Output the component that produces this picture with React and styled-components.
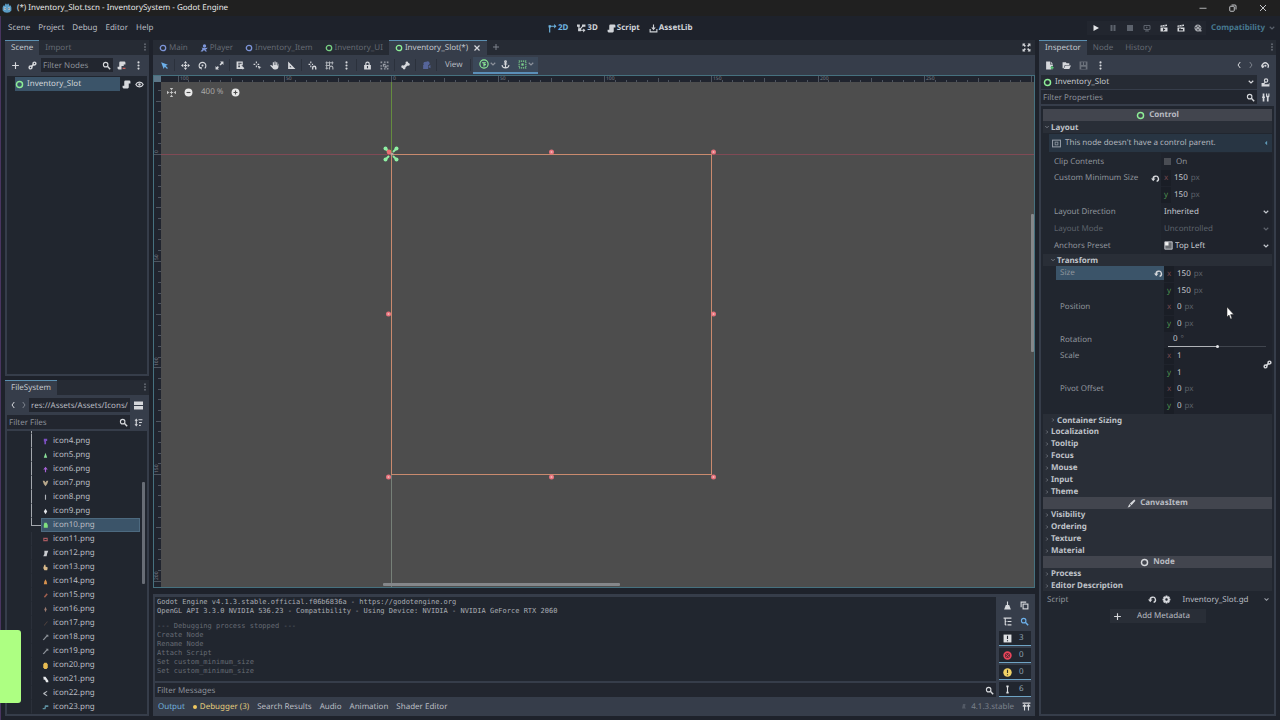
import React, { useState } from 'react';
import styled, { createGlobalStyle } from 'styled-components';

const GlobalStyle = createGlobalStyle`
  * {
    box-sizing: border-box;
  }

  body {
    margin: 0;
    background: #1e222b;
    overflow: hidden;
    text-rendering: geometricPrecision;
  }

  body, button, input, select {
    font-family: 'Noto Sans', 'Open Sans', sans-serif;
    font-size: 8px;
    line-height: 12px;
    color: #b9bcc2;
  }

  button, input, select {
    margin: 0;
    padding: 0;
    border: 0;
    background: none;
    outline: none;
    text-rendering: inherit;
  }

  ul {
    margin: 0;
    padding: 0;
    list-style: none;
  }
`;

/* ---------- icons ---------- */

const line = { fill: 'none', stroke: 'currentColor', strokeWidth: 2 };

const ICONS = {
  add: <path d="M8 2v12M2 8h12" {...line} />,
  close: <path d="M3 3l10 10M13 3L3 13" {...line} strokeWidth={2.4} />,
  link: (
    <g {...line}>
      <circle cx="4.5" cy="11.5" r="2.5" strokeWidth={2.6} />
      <circle cx="11.5" cy="4.5" r="2.5" strokeWidth={2.6} />
      <path d="M6 10l4-4" strokeWidth={3} />
    </g>
  ),
  search: (
    <g {...line}>
      <circle cx="6.5" cy="6.5" r="4" />
      <path d="M9.5 9.5L14.5 14.5" strokeWidth={2.6} />
    </g>
  ),
  script: (
    <path
      fill="currentColor"
      d="M6 1a2 2 0 0 0-2 2v7H1v3a2 2 0 0 0 2 2h7a2 2 0 0 0 2-2V6h3V3a2 2 0 0 0-2-2z"
    />
  ),
  scriptDetach: (
    <g>
      <path
        fill="currentColor"
        d="M6 1a2 2 0 0 0-2 2v7H1v3a2 2 0 0 0 2 2h5V9h4V6h3V3a2 2 0 0 0-2-2z"
      />
      <path d="M10 13h5" stroke="#e0675f" strokeWidth="2" />
    </g>
  ),
  dots: (
    <g fill="currentColor">
      <circle cx="8" cy="2.5" r="1.9" />
      <circle cx="8" cy="8" r="1.9" />
      <circle cx="8" cy="13.5" r="1.9" />
    </g>
  ),
  eye: (
    <g>
      <path d="M1.5 8C4 2.5 12 2.5 14.500 8 12 13.500 4 13.500 1.500 8z" {...line} />
      <circle cx="8" cy="8" r="2.2" fill="currentColor" />
    </g>
  ),
  ring: <circle cx="8" cy="8" r="5.4" {...line} strokeWidth={2.6} />,
  player: (
    <g fill="currentColor">
      <circle cx="9" cy="4" r="3.4" />
      <path d="M3 7l4 1h5l3-1-1 3-3 1 3 4h-3l-3-3-3 3H1l4-5z" />
    </g>
  ),
  select: <path fill="currentColor" d="M2 2l4.500 12 2-4 4 4 1.500-1.500-4-4 4-2z" />,
  move: (
    <g fill="currentColor">
      <path d="M8 0l3 4H5zM8 16l3-4H5zM0 8l4-3v6zM16 8l-4-3v6zM7 5h2v2h2v2H9v2H7V9H5V7h2z" />
    </g>
  ),
  rotate: (
    <g>
      <path d="M4 13A6 6 0 1 1 12 13" {...line} />
      <path d="M1.500 10.500h5v5z" fill="currentColor" />
      <circle cx="8" cy="8" r="1.800" fill="currentColor" />
    </g>
  ),
  scale: (
    <g fill="currentColor">
      <path d="M9 1h6v6l-2-2-3 3-2-2 3-3zM7 15H1V9l2 2 2-2 2 2-2 2z" />
    </g>
  ),
  list: (
    <path
      fill="currentColor"
      d="M1 1h11v7l-2-1v1l5 5-3 2-1-1H1zM4 3v2h6V3zM4 6v2h3V6zM4 9v2h3V9z"
      fillRule="evenodd"
    />
  ),
  pivot: (
    <g fill="currentColor">
      <path d="M5 1h2v3H5zM1 5h3v2H1zM5 8h2v3H5zM8 5h3v2H8z" />
      <path d="M8 8l7 3-3 1-1 3z" />
    </g>
  ),
  hand: (
    <path
      fill="currentColor"
      d="M5 2h2v5h1V1h2v6h1V2h2v6h1V5h1v6q-1 4-5 4H8q-3 0-4-3L0 8l2-1 3 2z"
    />
  ),
  ruler: <path fill="currentColor" fillRule="evenodd" d="M2 1l13 13H2zM5 8v3h3z" />,
  snap: (
    <g fill="currentColor">
      <path d="M4 1h2v3H4zM1 5h3v2H1zM4 8h2v3H4zM7 5h2v2H7z" />
      <path d="M7 15v-3a4 4 0 0 1 8 0v3h-2.500v-3a1.500 1.500 0 0 0-3 0v3z" />
    </g>
  ),
  grid: (
    <g>
      <path d="M3 1v14M8 1v7M13 1v5M1 3h14M1 8h8M1 13h5" {...line} strokeWidth={1.8} />
      <path d="M8 15v-3a3 3 0 0 1 6 0v3" {...line} />
    </g>
  ),
  lock: (
    <g>
      <path d="M5 8V5a3 3 0 0 1 6 0v3" {...line} />
      <path d="M2 7h12v8H2zM7 9v4h2V9z" fill="currentColor" fillRule="evenodd" />
    </g>
  ),
  group: (
    <g fill="currentColor">
      <path d="M1 1h3v2H3v1H1zM7 1h3v2H7zM12 1h3v3h-2V3h-1zM1 7h2v3H1zM13 7h2v3h-2zM1 12h2v1h1v2H1zM7 13h3v2H7zM15 12v3h-3v-2h1v-1z" />
      <path d="M5 5h5v2H7v3H5zM8 8h4v4H8z" />
    </g>
  ),
  bone: (
    <g fill="currentColor">
      <circle cx="10.500" cy="3.500" r="2.500" />
      <circle cx="13" cy="6" r="2.500" />
      <circle cx="3" cy="10" r="2.500" />
      <circle cx="5.500" cy="12.500" r="2.500" />
      <path d="M9.500 4l3 3-6 6-3.500-3z" />
    </g>
  ),
  camera: (
    <g fill="currentColor">
      <circle cx="6" cy="5" r="3.500" />
      <circle cx="10" cy="4" r="3.500" />
      <path d="M2 7h9v7H2zM12 9l3-2v6l-3-2z" />
    </g>
  ),
  anchorPreset: (
    <g>
      <circle cx="8" cy="8" r="6.600" {...line} strokeWidth={1.800} />
      <path d="M8 12V5M5 6h6M8 9h3" {...line} strokeWidth={1.800} />
    </g>
  ),
  anchor: (
    <g {...line}>
      <circle cx="8" cy="3" r="1.500" />
      <path d="M8 4v10M5 7h6M2 9q0 5 6 5t6-5" />
    </g>
  ),
  container: (
    <g>
      <rect x="2" y="2" width="12" height="12" {...line} strokeDasharray="2 1.400" strokeWidth={1.800} />
      <rect x="6" y="6" width="4" height="4" fill="currentColor" />
    </g>
  ),
  down: <path d="M3.500 5.500L8 10l4.500-4.500" {...line} strokeWidth={2.400} />,
  right: <path d="M6 4l4 4-4 4" {...line} />,
  left: <path d="M10.500 2L6 8l4.500 6" {...line} />,
  next: <path d="M5.500 2L10 8l-4.500 6" {...line} />,
  collapsed: <path d="M11 2L5 8l6 6z" fill="currentColor" />,
  expand: (
    <g fill="currentColor">
      <path d="M1 1h5L4.500 2.500 7 5 5 7 2.500 4.500 1 6zM15 1v5l-1.500-1.500L11 7 9 5l2.500-2.500L10 1zM1 15v-5l1.500 1.500L5 9l2 2-2.500 2.500L6 15zM15 15h-5l1.500-1.500L9 11l2-2 2.500 2.500L15 10z" />
    </g>
  ),
  view2d: (
    <g>
      <path d="M3 15V4h9" {...line} />
      <path d="M11 0l4 4-4 4zM1 2h4v4H1z" fill="currentColor" />
    </g>
  ),
  view3d: (
    <g>
      <path d="M3 3l1 8h9M4 11l7-8" {...line} />
      <path d="M0 1h5v4H0zM9 1h6v4H9zM2 8h5v5H2zM11 8l4 3-4 4z" fill="currentColor" />
    </g>
  ),
  assets: (
    <g>
      <path d="M2 9v5h12V9" {...line} />
      <path d="M7 1h2v5h3l-4 5-4-5h3z" fill="currentColor" />
    </g>
  ),
  play: <path fill="currentColor" d="M3 2l11 6-11 6z" />,
  pause: <path fill="currentColor" d="M3 2h4v12H3zM9 2h4v12H9z" />,
  stop: <path fill="currentColor" d="M2 2h12v12H2z" />,
  remote: (
    <g>
      <path d="M2 3h12v8H2zM8 11v3M4 14h8" {...line} />
      <path d="M6 5l4 2-4 2z" fill="currentColor" />
    </g>
  ),
  clap: (
    <path
      fill="currentColor"
      fillRule="evenodd"
      d="M1 3l13-2v3L1 6zM3 4l2 1 1-2zM8 3l2 1 1-2zM1 7h14v8H1zM6 8v6l5-3z"
    />
  ),
  clapFolder: (
    <path
      fill="currentColor"
      fillRule="evenodd"
      d="M1 3l13-2v3L1 6zM3 4l2 1 1-2zM8 3l2 1 1-2zM1 7h14v8H1zM4 9v4h8v-3H8V9z"
    />
  ),
  reel: (
    <g>
      <path
        fill="currentColor"
        fillRule="evenodd"
        d="M8 1a7 7 0 1 0 3 13.300V15h4v-3h-1.500A7 7 0 0 0 8 1zM8 3a1.400 1.400 0 1 1 0 2.800A1.400 1.400 0 0 1 8 3zM4 6a1.400 1.400 0 1 1 0 2.800A1.400 1.400 0 0 1 4 6zM12 6a1.400 1.400 0 1 1 0 2.800A1.400 1.400 0 0 1 12 6zM8 10a1.400 1.400 0 1 1 0 2.800A1.400 1.400 0 0 1 8 10z"
      />
    </g>
  ),
  newFile: (
    <g>
      <path d="M2 1h7v5h5v3h-3v6H2z" fill="currentColor" />
      <path d="M10 1l4 4h-4z" fill="currentColor" />
      <path d="M12.500 9v6M9.500 12h6" stroke="#5fd27a" strokeWidth="2" />
    </g>
  ),
  folder: <path fill="currentColor" d="M1 2h6l1 2h5v3H5l-2 6H1zM6 8h10l-3 6H3z" />,
  save: (
    <path
      fill="currentColor"
      fillRule="evenodd"
      d="M1 1h14v14H1zM4 2v5h3V2zM9 2v5h3V2zM4 10v4h8v-4z"
    />
  ),
  history: (
    <g>
      <path d="M3 12A5.500 5.500 0 1 1 12 12" {...line} strokeWidth={2.400} />
      <path d="M0 8h7l-3.500 5z" fill="currentColor" />
      <circle cx="8" cy="8.500" r="1.800" fill="currentColor" />
    </g>
  ),
  docs: (
    <g>
      <circle cx="9" cy="4.500" r="3" {...line} />
      <path d="M1 9h5v2h8V9h1v6H1z" fill="currentColor" />
      <path d="M8 7l-3 3" {...line} />
    </g>
  ),
  tools: (
    <g fill="currentColor">
      <path d="M3 1h3v5h1v3H6v6H3V9H2V6h1zM9 1h2v4h2V1h2v5l-1.500 2v7h-3V8L9 6z" />
    </g>
  ),
  info: (
    <g {...line} strokeWidth={1.800}>
      <rect x="1" y="2" width="14" height="12" />
      <rect x="5.500" y="5.500" width="5" height="5" strokeWidth={1.400} />
    </g>
  ),
  revert: (
    <g>
      <path d="M4 9.500A4.700 4.700 0 1 1 10 13" {...line} strokeWidth={2.400} />
      <path d="M0 8h8l-4 5z" fill="currentColor" />
    </g>
  ),
  topLeft: (
    <g>
      <path d="M1 1h14v14H1z" fill="#6a6d73" />
      <path d="M1.500 1.500h13v13h-13z" {...line} strokeWidth={1.400} />
      <path d="M2 2h6v6H2z" fill="#f2f2f2" />
    </g>
  ),
  brush: (
    <g fill="currentColor">
      <path d="M13 1l2 2-7 8-3-3zM4 9l3 3q-2 3-6 3 2-2 3-6z" />
    </g>
  ),
  gear: (
    <path
      fill="currentColor"
      fillRule="evenodd"
      d="M6.500 1h3l.5 2 2-1 2 2-1 2 2 .500v3l-2 .500 1 2-2 2-2-1-.5 2h-3L6 13l-2 1-2-2 1-2-2-.500v-3L3 6 2 4l2-2 2 1zM8 5.800a2.200 2.200 0 1 0 0 4.400 2.200 2.200 0 0 0 0-4.400z"
    />
  ),
  split: <path fill="currentColor" d="M0 1h16v6H0zM0 9h16v6H0z" />,
  sort: (
    <g fill="currentColor">
      <path d="M4 1l3 4H5v6h2l-3 4-3-4h2V5H1zM8 2h7v2H8zM9 7h5v2H9zM9 12h3v2H9z" />
    </g>
  ),
  clear: <path fill="currentColor" d="M7 1h2v6h2l3 8H2l3-8h2z" />,
  copy: (
    <g {...line}>
      <path d="M2 11V2h9" />
      <rect x="5.500" y="5.500" width="8.500" height="8.500" />
    </g>
  ),
  collapse: <path d="M1 2h14M4 2v12M4 8h2M4 14h2M8 8h7M8 14h7" {...line} />,
  msg: (
    <g>
      <path d="M1 1h14v14H1z" fill="#dfe1e4" />
      <path d="M7 3h2v6H7zM7 11h2v2H7z" fill="#21262f" />
    </g>
  ),
  error: (
    <g>
      <circle cx="8" cy="8" r="6" fill="#6b2a38" stroke="#e8455b" strokeWidth="3" />
      <path d="M5 5l6 6M11 5l-6 6" stroke="#e8455b" strokeWidth="1.400" />
    </g>
  ),
  warn: (
    <g>
      <circle cx="8" cy="8" r="7.500" fill="#f2d266" />
      <path d="M7 3h2v6H7zM7 11h2v2H7z" fill="#3b3526" />
    </g>
  ),
  editorMsg: <path fill="#dfe1e4" d="M6 1h4v3H9v8h1v3H6v-3h1V4H6z" />,
  pin: <path d="M1 2h14M4.500 4v11M11.500 4v11M1.500 8l3-3 3 3M8.500 8l3-3 3 3" {...line} />,
  bell: <path fill="currentColor" d="M6 2h5l-1 6 2 3H4z" />,
  center: (
    <g>
      <path d="M8 5v6M5 8h6" {...line} strokeWidth={1.600} />
      <path d="M8 4L5 0h6zM8 12l-3 4h6zM4 8L0 5v6zM12 8l4-3v6z" fill="currentColor" />
    </g>
  ),
  minus: (
    <g>
      <circle cx="8" cy="8" r="7" fill="currentColor" />
      <path d="M4.500 8h7" stroke="#4d4d4d" strokeWidth="2" />
    </g>
  ),
  plus: (
    <g>
      <circle cx="8" cy="8" r="7" fill="currentColor" />
      <path d="M4.500 8h7M8 4.500v7" stroke="#4d4d4d" strokeWidth="2" />
    </g>
  ),
  minimize: <path d="M1 8.500h14" {...line} strokeWidth={1.600} />,
  restore: (
    <g {...line} strokeWidth={1.800}>
      <rect x="1.500" y="4.500" width="9" height="10" rx="1.500" />
      <path d="M5 2h7q2 0 2 2v7" />
    </g>
  ),
  exit: <path d="M2 2l12 12M14 2L2 14" {...line} strokeWidth={1.800} />,
  godot: (
    <g>
      <path
        fill="#5a9cc4"
        d="M1 7l1-3 2 .500L5 3V1h2l1 2 1-2h2v2l1 1.500L14 4l1 3v5q-2 3.500-7 3.500T1 12z"
      />
      <circle cx="4.800" cy="9" r="1.800" fill="#e9eef2" />
      <circle cx="11.200" cy="9" r="1.800" fill="#e9eef2" />
      <circle cx="4.900" cy="9" r="0.900" fill="#333" />
      <circle cx="11.100" cy="9" r="0.900" fill="#333" />
    </g>
  ),
};

const Svg = styled.svg`
  display: block;
  flex: none;
  color: ${(p) => p.$color || '#d6d8dc'};
`;

function Icon({ name, size = 9, color }) {
  return (
    <Svg $color={color} width={size} height={size} viewBox="0 0 16 16" aria-hidden="true">
      {ICONS[name]}
    </Svg>
  );
}

/* ---------- shared parts ---------- */

const Row = styled.div`
  display: flex;
  align-items: center;
  flex: none;
  gap: ${(p) => p.$gap || 0}px;
`;

const Spacer = styled.div`
  flex: 1;
`;

const IconButton = styled.button`
  display: flex;
  align-items: center;
  justify-content: center;
  flex: none;
  width: 17px;
  height: 14px;
`;

const SmallButton = styled(IconButton)`
  width: ${(p) => p.$width || 13}px;
`;

const Dock = styled.section`
  display: flex;
  flex-direction: column;
  flex: 1;
  min-height: 0;
  background: #262b34;
`;

const TabBar = styled.div`
  display: flex;
  flex: none;
  height: 15px;
  align-items: stretch;
  background: #262b34;
`;

const Tab = styled.button`
  display: flex;
  align-items: center;
  gap: 2px;
  padding: 0 6px;
  border-top: 1px solid ${(p) => (p.$active ? '#5b8fb0' : 'transparent')};
  background: ${(p) => (p.$active ? '#363d4a' : 'transparent')};
  color: ${(p) => (p.$active ? '#c4c8ce' : '#656a73')};
`;

const DockBody = styled.div`
  display: flex;
  flex-direction: column;
  flex: 1;
  min-height: 0;
  padding: 0 2px 2px;
  background: #363d4a;
`;

const Well = styled.div`
  flex: 1;
  min-height: 0;
  overflow: hidden;
  position: relative;
  margin-top: 1px;
  padding: ${(p) => (p.$framed ? '3px 2px' : 0)};
  background: #21262f;
`;

const Field = styled.label`
  display: flex;
  align-items: center;
  flex: 1;
  min-width: 0;
  height: 14px;
  padding: 0 2px;
  background: #22262f;
`;

const FieldRow = styled.div`
  display: flex;
  align-items: center;
  flex: none;
  height: 15px;
  padding-bottom: 1px;
`;

const TextInput = styled.input`
  flex: 1;
  min-width: 0;
  height: 14px;

  &::placeholder {
    color: #8b9099;
    opacity: 1;
  }
`;

/* ---------- title and menu ---------- */

const Window = styled.div`
  position: relative;
  display: flex;
  flex-direction: column;
  height: 100vh;
  background: #1e222b;
`;

const TitleBar = styled.header`
  display: flex;
  align-items: center;
  flex: none;
  height: 16px;
  padding: 0 2px;
  gap: 5px;
  background: #202020;
  color: #e8e8e8;
`;

const WindowButton = styled(IconButton)`
  width: 30px;
`;

const Frame = styled.div`
  display: flex;
  flex-direction: column;
  flex: 1;
  min-height: 0;
  border-left: 1px solid #493560;
  padding: 0 4px 4px;
`;

const MenuBar = styled.nav`
  display: flex;
  align-items: center;
  justify-content: space-between;
  flex: none;
  height: 24px;
  padding-left: 3px;
`;

const ModeButton = styled.button`
  display: flex;
  align-items: center;
  gap: 1px;
  font-weight: 700;
  color: ${(p) => (p.$active ? '#6fb4e0' : '#d0d3d8')};
`;

const RunBar = styled.div`
  display: flex;
  margin-right: 5px;
  background: #22262f;
`;

const Renderer = styled.button`
  display: flex;
  align-items: center;
  gap: 3px;
  font-weight: 700;
  color: #47788f;
`;

const MENU = ['Scene', 'Project', 'Debug', 'Editor', 'Help'];
const MODES = [
  ['view2d', '2D'],
  ['view3d', '3D'],
  ['script', 'Script'],
  ['assets', 'AssetLib'],
];
const RUN = [
  ['play', '#e4e6e9'],
  ['pause', '#5c626c'],
  ['stop', '#5c626c'],
  ['remote', '#5c626c'],
  ['clap', '#d6d8dc'],
  ['clapFolder', '#d6d8dc'],
  ['reel', '#a2a5ab'],
];

function TopMenu() {
  return (
    <MenuBar>
      <Row $gap={8}>
        {MENU.map((m) => (
          <button key={m}>{m}</button>
        ))}
      </Row>
      <Row $gap={9}>
        {MODES.map(([icon, text], i) => (
          <ModeButton key={text} $active={i === 0}>
            <Icon name={icon} color="currentColor" />
            {text}
          </ModeButton>
        ))}
      </Row>
      <Row>
        <RunBar>
          {RUN.map(([icon, color]) => (
            <IconButton key={icon} aria-label={icon}>
              <Icon name={icon} color={color} size={8} />
            </IconButton>
          ))}
        </RunBar>
        <Renderer>
          Compatibility
          <Icon name="down" color="#59606b" size={8} />
        </Renderer>
      </Row>
    </MenuBar>
  );
}

/* ---------- left column ---------- */

const Workspace = styled.main`
  display: grid;
  grid-template-columns: 144px minmax(0, 1fr) 237px;
  gap: 4px;
  flex: 1;
  min-height: 0;
`;

const Column = styled.div`
  display: flex;
  flex-direction: column;
  min-height: 0;
  gap: ${(p) => p.$gap || 4}px;
`;

const DockToolbar = styled.div`
  display: flex;
  align-items: center;
  flex: none;
  height: 20px;
`;

const NodeRow = styled.div`
  display: flex;
  align-items: center;
  padding: 1px 1px 0 8px;
`;

const NodeName = styled.button`
  display: flex;
  align-items: center;
  flex: 1;
  gap: 3px;
  height: 14px;
  background: #3b5469;
  color: #d0d4da;
`;

function SceneDock() {
  return (
    <Dock>
      <TabBar>
        <Tab $active>Scene</Tab>
        <Tab>Import</Tab>
        <Spacer />
        <SmallButton $width={9} aria-label="Dock options">
          <Icon name="dots" color="#656a73" size={8} />
        </SmallButton>
      </TabBar>
      <DockBody>
        <DockToolbar>
          <IconButton aria-label="Add node">
            <Icon name="add" />
          </IconButton>
          <IconButton aria-label="Instantiate scene">
            <Icon name="link" />
          </IconButton>
          <Field>
            <TextInput placeholder="Filter Nodes" aria-label="Filter Nodes" />
            <Icon name="search" />
          </Field>
          <IconButton aria-label="Detach script">
            <Icon name="scriptDetach" />
          </IconButton>
          <IconButton aria-label="More">
            <Icon name="dots" />
          </IconButton>
        </DockToolbar>
        <Well>
          <NodeRow>
            <NodeName>
              <Icon name="ring" color="#8eef97" />
              Inventory_Slot
            </NodeName>
            <SmallButton aria-label="Open script">
              <Icon name="script" />
            </SmallButton>
            <SmallButton aria-label="Toggle visibility">
              <Icon name="eye" />
            </SmallButton>
          </NodeRow>
        </Well>
      </DockBody>
    </Dock>
  );
}

const FILES = [
  ['icon3', '#8a5fc0', 'M6 3h4v9H6z'],
  ['icon4', '#7b4fc0', 'M5 3h6v4h-2v6H6V8H5z'],
  ['icon5', '#8be09a', 'M8 3l3 9H5z'],
  ['icon6', '#a862d8', 'M8 3l4 5H9v5H7V8H4z'],
  ['icon7', '#b8a88c', 'M3 3h3l2 3 2-3h3l-2 6-3 4-3-4z'],
  ['icon8', '#b0b4ba', 'M7 3h2v9H7z'],
  ['icon9', '#e4e6ea', 'M8 3l3 5-3 5-3-5z'],
  ['icon10', '#7fe07f', 'M6 3h4l2 4v5H5V7z'],
  ['icon11', '#a85a60', 'M4 5h8v6H4zM6 7v2h4V7z'],
  ['icon12', '#c9ccd0', 'M6 3h7l-2 5-1 5H4l2-4z'],
  ['icon13', '#d9b98a', 'M6 3h2v3l4 2-1 5H6l-2-4z'],
  ['icon14', '#d8924e', 'M8 4l2 4 1 5H5l1-5z'],
  ['icon15', '#a05f4e', 'M10 4l2 2-5 6-2-2z'],
  ['icon16', '#9a7a70', 'M8 3l2 5-2 5-2-5z'],
  ['icon17', '#54443f', 'M11 4l1 1-6 7-1-1z'],
  ['icon18', '#8d9299', 'M8 3h5v4l-2-1-6 7-2-1 7-8z'],
  ['icon19', '#8d9299', 'M8 3h5v4l-2-1-6 7-2-1 7-8z'],
  ['icon20', '#e8bc52', 'M6 3h4l2 3v5l-2 3H6l-2-3V6z'],
  ['icon21', '#e8eaec', 'M4 3h4l5 7v3H9L7 8 5 9z'],
  ['icon22', '#b4b8be', 'M11 3v2L7 8l4 3v2L4 9V7z'],
  ['icon23', '#5d8fa0', 'M7 4h6v3H9l-1 4H3V9h3z'],
];

const FileList = styled.ul`
  margin-top: -11px;
  padding: 0 7px 0 24px;
`;

const FileRow = styled.li`
  display: flex;
  align-items: center;
  height: 14px;
`;

const Branch = styled.span`
  align-self: flex-start;
  width: 10px;
  height: ${(p) => (p.$end ? 8 : 14)}px;
  border-left: 1px solid ${(p) => (p.$lit ? '#a4a8ae' : '#2b303a')};
  border-bottom: 1px solid ${(p) => (p.$end ? '#a4a8ae' : 'transparent')};
`;

const FileButton = styled.button`
  display: flex;
  align-items: center;
  flex: 1;
  gap: 3px;
  height: 14px;
  outline: ${(p) => (p.$selected ? '1px solid #4d6a80' : 'none')};
  outline-offset: -1px;
  background: ${(p) => (p.$selected ? '#3b5469' : 'transparent')};
`;

const ScrollThumb = styled.span`
  position: absolute;
  border-radius: 1px;
  background: #686d76;
`;

const FileThumb = styled(ScrollThumb)`
  top: 18%;
  right: 2px;
  width: 3px;
  height: 36%;
`;

function FileSystemDock() {
  const [selected, setSelected] = useState(7);

  return (
    <Dock>
      <TabBar>
        <Tab $active>FileSystem</Tab>
        <Spacer />
        <SmallButton $width={9} aria-label="Dock options">
          <Icon name="dots" color="#656a73" size={8} />
        </SmallButton>
      </TabBar>
      <DockBody>
        <DockToolbar>
          <SmallButton $width={11} aria-label="Back">
            <Icon name="left" size={8} />
          </SmallButton>
          <SmallButton $width={11} aria-label="Forward">
            <Icon name="next" color="#7d838d" size={8} />
          </SmallButton>
          <Field>
            <TextInput defaultValue="res://Assets/Assets/Icons/ic" aria-label="Path" />
          </Field>
          <IconButton aria-label="Split mode">
            <Icon name="split" />
          </IconButton>
        </DockToolbar>
        <FieldRow>
          <Field>
            <TextInput placeholder="Filter Files" aria-label="Filter Files" />
            <Icon name="search" />
          </Field>
          <IconButton aria-label="Sort files">
            <Icon name="sort" />
          </IconButton>
        </FieldRow>
        <Well>
          <FileList>
            {FILES.map(([name, color, d], i) => (
              <FileRow key={name}>
                <Branch $lit={i <= selected} $end={i === selected} />
                <FileButton $selected={i === selected} onClick={() => setSelected(i)}>
                  <Svg width="9" height="9" viewBox="0 0 16 16" $color={color}>
                    <path fill="currentColor" fillRule="evenodd" d={d} />
                  </Svg>
                  {`${name}.png`}
                </FileButton>
              </FileRow>
            ))}
          </FileList>
          <FileThumb />
        </Well>
      </DockBody>
    </Dock>
  );
}

/* ---------- canvas ---------- */

const Toolbar = styled.div`
  display: flex;
  align-items: center;
  flex: none;
  height: 20px;
  padding-left: 3px;
  background: #363d4a;
`;

const Divider = styled.span`
  width: 1px;
  height: 12px;
  margin: 0 2px 0 1px;
  background: #2b313c;
`;

const ViewButton = styled.button`
  padding: 0 6px;
`;

const ContextTools = styled.div`
  display: flex;
  align-items: center;
  gap: 2px;
  height: 17px;
  padding: 0 1px 0 6px;
  border-bottom: 2px solid #5b8fb8;
  background: #3b4859;
`;

const ContextButton = styled.button`
  display: flex;
  align-items: center;
  padding-right: ${(p) => (p.$plain ? 6 : 2)}px;
`;

const EditorArea = styled.section`
  display: flex;
  flex-direction: column;
  flex: 1;
  min-height: 0;
`;

const Viewport = styled.div`
  position: relative;
  flex: 1;
  min-height: 0;
  overflow: hidden;
  border: 1px solid #46717f;
  background: #4d4d4d;
`;

const Drawing = styled.svg`
  position: absolute;
  inset: 0;
  width: 100%;
  height: 100%;
`;

const ZoomBar = styled.div`
  position: absolute;
  top: 9px;
  left: 9px;
  display: flex;
  align-items: center;
`;

const ZoomText = styled.button`
  padding: 0 4px;
  color: #a9a9a9;
`;

const HorizontalThumb = styled(ScrollThumb)`
  bottom: 1px;
  left: 26%;
  width: 27%;
  height: 3px;
  background: #85878a;
`;

const VerticalThumb = styled(ScrollThumb)`
  top: 27%;
  right: 0;
  width: 3px;
  height: 27%;
  background: #85878a;
`;

const TOOL_GROUPS = [
  ['select'],
  ['move', 'rotate', 'scale'],
  ['list', 'pivot', 'hand', 'ruler'],
  ['snap', 'grid', 'dots'],
  ['lock', 'group'],
  ['bone'],
  ['camera'],
];
const TOOL_COLORS = { select: '#6cb0ea', camera: '#56659a', group: '#9a9ea6', grid: '#b0b4ba' };

const SCENES = [
  ['ring', '#7d95d8', 'Main'],
  ['player', '#7d95d8', 'Player'],
  ['ring', '#7d95d8', 'Inventory_Item'],
  ['ring', '#79d184', 'Inventory_UI'],
];

const UNIT = 320 / 150;
const ORIGIN = { x: 237, y: 78 };
const HANDLES = [
  [160, -2], [322, -2], [-3, 160], [322, 160], [-3, 323], [160, 323], [322, 323],
];

// one tick for every five canvas pixels, a label on each fiftieth
function ticks(from, to) {
  const list = [];
  for (let v = from; v <= to; v += 5) list.push(v);
  return list;
}

function CanvasDrawing() {
  const { x, y } = ORIGIN;
  return (
    <Drawing>
      <path d={`M0 ${y + 0.5}H${x}M${x + 320} ${y + 0.5}H4000`} stroke="#804a55" />
      <path d={`M${x + 0.5} 0V${y}`} stroke="#658c3f" />
      <path d={`M${x + 0.5} ${y + 320}V3000`} stroke="#768078" />
      <rect x={x + 0.5} y={y + 0.5} width="320" height="320" fill="none" stroke="#c98a6e" />
      <g fill="#8ff0a4" stroke="#8ff0a4">
        {[[-1, -1], [1, -1], [-1, 1], [1, 1]].map(([sx, sy]) => (
          <g key={`${sx}${sy}`}>
            <path
              d={`M${x + sx * 2} ${y + sy * 2}L${x + sx * 6} ${y + sy * 6}`}
              strokeWidth="2"
            />
            <circle cx={x + sx * 5.500} cy={y + sy * 5.500} r="2" stroke="none" />
          </g>
        ))}
      </g>
      <circle cx={x - 2} cy={y - 2} r="2.400" fill="#ea6e72" />
      <circle cx={x + 1} cy={y} r="1.600" fill="#b9a79c" />
      {HANDLES.map(([hx, hy]) => (
        <g key={`${hx}-${hy}`}>
          <circle cx={x + hx + 0.5} cy={y + hy} r="2.500" fill="#e8727c" />
          <circle cx={x + hx + 0.5} cy={y + hy} r="1" fill="#f1b6b6" />
        </g>
      ))}
      <rect width="100%" height="6" fill="#20242e" />
      <rect width="7" height="100%" fill="#20242e" />
      <g stroke="#4e5560">
        {ticks(-100, 600).map((v) => (
          <path
            key={v}
            d={`M${Math.round(x + v * UNIT) + 0.5} 6V${v % 50 === 0 ? 0 : v % 25 === 0 ? 2 : 4}`}
          />
        ))}
        {ticks(-30, 400).map((v) => (
          <path
            key={v}
            d={`M7 ${Math.round(y + v * UNIT) + 0.5}H${v % 50 === 0 ? 0 : v % 25 === 0 ? 2 : 4}`}
          />
        ))}
      </g>
      <g fill="#7b818b" fontSize="5">
        {[-100, -50, 0, 50, 100, 150, 200, 250].map((v) => (
          <text key={v} x={Math.round(x + v * UNIT) + 2} y="4">
            {Math.abs(v)}
          </text>
        ))}
        {[0, 50, 100, 150, 200].map((v) => {
          const ty = Math.round(y + v * UNIT) - 1;
          return (
            <text key={v} x="4" y={ty} transform={`rotate(-90 4 ${ty})`}>
              {v}
            </text>
          );
        })}
      </g>
      <rect width="7" height="6" fill="#5c7688" />
    </Drawing>
  );
}

function CanvasEditor() {
  return (
    <EditorArea>
      <TabBar>
        {SCENES.map(([icon, color, text]) => (
          <Tab key={text}>
            <Icon name={icon} color={color} size={8} />
            {text}
          </Tab>
        ))}
        <Tab $active>
          <Icon name="ring" color="#8eef97" size={8} />
          Inventory_Slot(*)
          <Row $gap={3}>
            <span />
            <Icon name="close" size={8} />
          </Row>
        </Tab>
        <IconButton aria-label="New scene">
          <Icon name="add" color="#7d828b" size={8} />
        </IconButton>
        <Spacer />
        <IconButton aria-label="Distraction free mode">
          <Icon name="expand" />
        </IconButton>
      </TabBar>
      <Toolbar>
        {TOOL_GROUPS.map((group) => (
          <React.Fragment key={group[0]}>
            {group.map((tool) => (
              <IconButton key={tool} aria-label={tool}>
                <Icon name={tool} color={TOOL_COLORS[tool]} />
              </IconButton>
            ))}
            <Divider />
          </React.Fragment>
        ))}
        <ViewButton>View</ViewButton>
        <Divider />
        <ContextTools>
          <ContextButton aria-label="Anchor preset">
            <Icon name="anchorPreset" size={10} color="#8eef97" />
            <Icon name="down" size={8} color="#8b919b" />
          </ContextButton>
          <ContextButton $plain aria-label="Anchor mode">
            <Icon name="anchor" />
          </ContextButton>
          <ContextButton aria-label="Container sizing">
            <Icon name="container" color="#7fd68c" />
            <Icon name="down" size={8} color="#8b919b" />
          </ContextButton>
        </ContextTools>
      </Toolbar>
      <Viewport>
        <CanvasDrawing />
        <ZoomBar>
          <IconButton aria-label="Center view">
            <Icon name="center" color="#c6c6c6" />
          </IconButton>
          <IconButton aria-label="Zoom out">
            <Icon name="minus" color="#e8e8e8" />
          </IconButton>
          <ZoomText>400 %</ZoomText>
          <IconButton aria-label="Zoom in">
            <Icon name="plus" color="#e8e8e8" />
          </IconButton>
        </ZoomBar>
        <HorizontalThumb />
        <VerticalThumb />
      </Viewport>
    </EditorArea>
  );
}

/* ---------- output ---------- */

const OutputPanel = styled.section`
  display: flex;
  flex-direction: column;
  flex: none;
  padding: 3px 2px 0;
  background: #363d4a;
`;

const OutputBody = styled.div`
  display: grid;
  grid-template-columns: minmax(0, 1fr) 34px;
  gap: 3px;
`;

const Log = styled.div`
  height: 84px;
  padding: 1px 2px;
  overflow: hidden;
  background: #21262f;
  font-family: 'DejaVu Sans Mono', 'Liberation Mono', monospace;
  font-size: 7px;
  line-height: 9px;
`;

const LogLine = styled.div`
  white-space: pre;
  color: ${(p) => (p.$dim ? '#666b74' : '#a9adb4')};
`;

const LogGap = styled.div`
  height: 6px;
`;

const SideTools = styled.div`
  display: grid;
  grid-template-columns: 1fr 1fr;
  grid-auto-rows: 16px;
  align-items: center;
  justify-items: center;
`;

const Counter = styled.button`
  display: flex;
  align-items: center;
  gap: 7px;
  width: 32px;
  height: 15px;
  padding-left: 4px;
  border-bottom: 1px solid #6ea3c4;
  background: #21262f;
  color: #8fa3b4;
`;

const BottomTabs = styled.div`
  display: flex;
  align-items: center;
  gap: 8px;
  height: 19px;
  padding: 0 2px 0 3px;
`;

const BottomTab = styled.button`
  display: flex;
  align-items: center;
  gap: 3px;
  color: ${(p) => p.$color || '#b9bcc2'};
`;

const Dot = styled.span`
  width: 4px;
  height: 4px;
  border-radius: 50%;
  background: #f0c860;
`;

const Version = styled.button`
  color: #7b818b;
`;

const HEADER_LINES = [
  'Godot Engine v4.1.3.stable.official.f06b6836a - https://godotengine.org',
  'OpenGL API 3.3.0 NVIDIA 536.23 - Compatibility - Using Device: NVIDIA - NVIDIA GeForce RTX 2060',
];
const LOG_LINES = [
  '--- Debugging process stopped ---',
  'Create Node',
  'Rename Node',
  'Attach Script',
  'Set custom_minimum_size',
  'Set custom_minimum_size',
];
const COUNTERS = [['msg', 3], ['error', 0], ['warn', 0], ['editorMsg', 6]];

function Output() {
  return (
    <OutputPanel>
      <OutputBody>
        <Column $gap={2}>
          <Log>
            {HEADER_LINES.map((text) => (
              <LogLine key={text}>{text}</LogLine>
            ))}
            <LogGap />
            {LOG_LINES.map((text, i) => (
              <LogLine key={i} $dim>
                {text}
              </LogLine>
            ))}
          </Log>
          <Row>
            <Field>
              <TextInput placeholder="Filter Messages" aria-label="Filter Messages" />
              <Icon name="search" />
            </Field>
          </Row>
        </Column>
        <Column $gap={2}>
          <SideTools>
            <IconButton aria-label="Clear output"><Icon name="clear" /></IconButton>
            <IconButton aria-label="Copy selection"><Icon name="copy" /></IconButton>
            <IconButton aria-label="Collapse duplicates"><Icon name="collapse" /></IconButton>
            <IconButton aria-label="Focus filter"><Icon name="search" color="#6cb0ea" /></IconButton>
          </SideTools>
          {COUNTERS.map(([icon, n]) => (
            <Counter key={icon}>
              <Icon name={icon} />
              {n}
            </Counter>
          ))}
        </Column>
      </OutputBody>
      <BottomTabs>
        <BottomTab $color="#6fb0dc">Output</BottomTab>
        <BottomTab $color="#e3cb7c">
          <Dot />
          Debugger (3)
        </BottomTab>
        <BottomTab>Search Results</BottomTab>
        <BottomTab>Audio</BottomTab>
        <BottomTab>Animation</BottomTab>
        <BottomTab>Shader Editor</BottomTab>
        <Spacer />
        <Row $gap={3}>
          <Icon name="bell" color="#525965" size={8} />
          <Version>4.1.3.stable</Version>
        </Row>
        <Icon name="pin" />
      </BottomTabs>
    </OutputPanel>
  );
}

/* ---------- inspector ---------- */

const Picker = styled.div`
  display: flex;
  align-items: center;
  flex: 1;
  min-width: 0;
  height: 14px;
  padding: 0 2px 0 ${(p) => p.$pad || 0}px;
  gap: ${(p) => p.$gap || 2}px;
  background: ${(p) => p.$bg || 'transparent'};
`;

const Select = styled.select`
  appearance: none;
  flex: 1;
  min-width: 0;
  opacity: 1;
  color: ${(p) => (p.$dim ? '#5d626b' : '#c4c8ce')};
`;

const Category = styled.h2`
  display: flex;
  align-items: center;
  justify-content: center;
  gap: 4px;
  height: 12px;
  margin: 0;
  font-size: 8px;
  font-weight: 700;
  background: #42454e;
`;

const FoldList = styled.div`
  display: flex;
  flex-direction: column;
  gap: 1px;
  background: #292e37;
`;

const Fold = styled.button`
  display: flex;
  align-items: center;
  width: 100%;
  height: ${(p) => p.$height || 11}px;
  gap: 1px;
  padding-left: ${(p) => (p.$nested ? 7 : 1)}px;
  background: #292e37;
  font-weight: 700;
  line-height: 11px;
  color: #bfc2c8;
`;

const Info = styled.div`
  display: flex;
  align-items: center;
  gap: 4px;
  height: 18px;
  margin: 1px 0 1px 6px;
  padding: 0 3px;
  background: #283543;
  color: #b0b4bb;
`;

const Properties = styled.div`
  padding-left: ${(p) => p.$indent}px;
`;

const Property = styled.div`
  display: grid;
  grid-template-columns: 1fr 1fr;
  color: #8f949c;
`;

const PropertyName = styled.label`
  display: flex;
  align-items: center;
  justify-content: space-between;
  height: ${(p) => p.$height || 17}px;
  padding: 0 1px 0 4px;
  background: ${(p) => (p.$selected ? '#3b5469' : 'transparent')};
  color: ${(p) => (p.$dim ? '#5d626b' : '#8f949c')};
`;

const PropertyValue = styled.div`
  display: flex;
  align-items: center;
  min-width: 0;
  padding-left: ${(p) => (p.$flush ? 0 : 3)}px;
  background: #1f232c;
`;

const Axes = styled.div`
  display: flex;
  flex-direction: column;
  flex: 1;
  gap: 1px;
`;

const Axis = styled.label`
  display: flex;
  align-items: center;
  height: 16px;
`;

const AxisName = styled.span`
  width: 10px;
  height: 16px;
  line-height: 15px;
  margin-right: 3px;
  text-align: center;
  background: #1a1e26;
  color: ${(p) => (p.$axis === 'x' ? '#74484e' : '#4f9150')};
`;

const NumberInput = styled.input`
  field-sizing: content;
  color: #c4c8ce;
`;

const Unit = styled.span`
  padding-left: 3px;
  color: #5b6069;
`;

const Checkbox = styled.input`
  appearance: none;
  width: 7px;
  height: 7px;
  margin-right: 5px;
  background: #4a4d54;
`;

const RotationBox = styled.div`
  flex: 1;
  padding: 0 6px 0 4px;
`;

const RotationText = styled.div`
  display: flex;
  height: 12px;
  padding-left: 5px;
`;

const Slider = styled.input`
  appearance: none;
  display: block;
  width: 100%;
  height: 3px;

  &::-webkit-slider-runnable-track {
    height: 1px;
    background: linear-gradient(to right, #b0b3b8 50%, #40454e 50%);
  }

  &::-webkit-slider-thumb {
    appearance: none;
    width: 3px;
    height: 3px;
    margin-top: -1px;
    border-radius: 50%;
    background: #e4e6e9;
  }
`;

const ScriptRow = styled.div`
  display: grid;
  grid-template-columns: 1fr 1fr;
  align-items: center;
  height: 17px;
  color: #8f949c;
`;

const ScriptName = styled.button`
  flex: 1;
  text-align: left;
  padding-left: 9px;
`;

const MetadataButton = styled.button`
  display: flex;
  align-items: center;
  width: 96px;
  height: 14px;
  margin: 1px auto 0;
  padding-left: 3px;
  background: #292e37;
`;

const MetadataText = styled.span`
  flex: 1;
`;

function Vector({ id, x, y, unit, linked }) {
  return (
    <PropertyValue $flush>
      <Axes>
        {[['x', x], ['y', y]].map(([axis, value]) => (
          <Axis key={axis}>
            <AxisName $axis={axis}>{axis}</AxisName>
            <NumberInput id={`${id}-${axis}`} defaultValue={value} />
            {unit && <Unit>{unit}</Unit>}
          </Axis>
        ))}
      </Axes>
      {linked && <Icon name="link" />}
    </PropertyValue>
  );
}

function VectorProperty({ id, name, revert, selected, ...rest }) {
  return (
    <Property>
      <PropertyName htmlFor={`${id}-x`} $height={selected ? 14 : 16} $selected={selected}>
        {name}
        {revert && <Icon name="revert" />}
      </PropertyName>
      <Vector id={id} {...rest} />
    </Property>
  );
}

function ChoiceProperty({ id, name, value, icon, dim }) {
  return (
    <Property>
      <PropertyName htmlFor={id} $dim={dim}>
        {name}
      </PropertyName>
      <PropertyValue>
        <Picker>
          {icon && <Icon name={icon} />}
          <Select id={id} $dim={dim} disabled={dim}>
            <option>{value}</option>
          </Select>
          <Icon name="down" size={8} color={dim ? '#5d626b' : '#c4c8ce'} />
        </Picker>
      </PropertyValue>
    </Property>
  );
}

function Folds({ names }) {
  return (
    <FoldList>
      {names.map((name) => (
        <Fold key={name}>
          <Icon name="right" size={6} color="#7d828b" />
          {name}
        </Fold>
      ))}
    </FoldList>
  );
}

function Inspector() {
  return (
    <Dock>
      <TabBar>
        <Tab $active>Inspector</Tab>
        <Tab>Node</Tab>
        <Tab>History</Tab>
        <Spacer />
        <SmallButton $width={9} aria-label="Dock options">
          <Icon name="dots" color="#656a73" size={8} />
        </SmallButton>
      </TabBar>
      <DockBody>
        <DockToolbar>
          <IconButton aria-label="New resource"><Icon name="newFile" /></IconButton>
          <IconButton aria-label="Load resource"><Icon name="folder" /></IconButton>
          <IconButton aria-label="Save resource"><Icon name="save" color="#6b717b" /></IconButton>
          <IconButton aria-label="Resource options"><Icon name="dots" /></IconButton>
          <Spacer />
          <SmallButton $width={12} aria-label="Previous"><Icon name="left" size={8} /></SmallButton>
          <SmallButton $width={12} aria-label="Next"><Icon name="next" size={8} color="#7d838d" /></SmallButton>
          <IconButton aria-label="Object history"><Icon name="history" /></IconButton>
        </DockToolbar>
        <FieldRow>
          <Picker $bg="#262b34" $pad={2} $gap={3}>
            <Icon name="ring" color="#8eef97" />
            <Select aria-label="Edited object">
              <option>Inventory_Slot</option>
            </Select>
            <Icon name="down" size={8} />
          </Picker>
          <IconButton aria-label="Open documentation"><Icon name="docs" /></IconButton>
        </FieldRow>
        <FieldRow>
          <Field>
            <TextInput placeholder="Filter Properties" aria-label="Filter Properties" />
            <Icon name="search" />
          </Field>
          <IconButton aria-label="Manage properties"><Icon name="tools" /></IconButton>
        </FieldRow>
        <Well $framed>
          <Category>
            <Icon name="ring" color="#8eef97" />
            Control
          </Category>
          <Fold $height={12}>
            <Icon name="down" size={6} color="#7d828b" />
            Layout
          </Fold>
          <Info>
            <Icon name="info" color="#98a0aa" />
            This node doesn't have a control parent.
            <Spacer />
            <Icon name="collapsed" size={6} color="#5f9ab8" />
          </Info>
          <Properties $indent={7}>
            <Property>
              <PropertyName htmlFor="clip">Clip Contents</PropertyName>
              <PropertyValue>
                <Checkbox type="checkbox" id="clip" />
                <label htmlFor="clip">On</label>
              </PropertyValue>
            </Property>
            <VectorProperty id="min" name="Custom Minimum Size" revert x="150" y="150" unit="px" />
            <ChoiceProperty id="dir" name="Layout Direction" value="Inherited" />
            <ChoiceProperty id="mode" name="Layout Mode" value="Uncontrolled" dim />
            <ChoiceProperty id="preset" name="Anchors Preset" value="Top Left" icon="topLeft" />
          </Properties>
          <Fold $nested $height={12}>
            <Icon name="down" size={6} color="#7d828b" />
            Transform
          </Fold>
          <Properties $indent={13}>
            <VectorProperty id="size" name="Size" revert selected x="150" y="150" unit="px" />
            <VectorProperty id="position" name="Position" x="0" y="0" unit="px" />
            <Property>
              <PropertyName htmlFor="rotation" $height={16}>
                Rotation
              </PropertyName>
              <PropertyValue $flush>
                <RotationBox>
                  <RotationText>
                    <NumberInput id="rotation" defaultValue="0" />
                    <Unit>°</Unit>
                  </RotationText>
                  <Slider type="range" aria-label="Rotation" min="-360" max="360" defaultValue="0" />
                </RotationBox>
              </PropertyValue>
            </Property>
            <VectorProperty id="scale" name="Scale" x="1" y="1" linked />
            <VectorProperty id="pivot" name="Pivot Offset" x="0" y="0" unit="px" />
          </Properties>
          <Fold $nested $height={12}>
            <Icon name="right" size={6} color="#7d828b" />
            Container Sizing
          </Fold>
          <Folds names={['Localization', 'Tooltip', 'Focus', 'Mouse', 'Input', 'Theme']} />
          <Category>
            <Icon name="brush" />
            CanvasItem
          </Category>
          <Folds names={['Visibility', 'Ordering', 'Texture', 'Material']} />
          <Category>
            <Icon name="ring" />
            Node
          </Category>
          <Folds names={['Process', 'Editor Description']} />
          <ScriptRow>
            <PropertyName htmlFor="script">
              Script
              <Icon name="revert" />
            </PropertyName>
            <Picker $pad={4} $gap={3}>
              <Icon name="gear" />
              <ScriptName id="script">Inventory_Slot.gd</ScriptName>
              <Icon name="down" size={7} color="#9a9ea6" />
            </Picker>
          </ScriptRow>
          <MetadataButton>
            <Icon name="add" />
            <MetadataText>Add Metadata</MetadataText>
          </MetadataButton>
        </Well>
      </DockBody>
    </Dock>
  );
}

/* ---------- overlays ---------- */

const GreenTag = styled.div`
  position: absolute;
  left: 0;
  bottom: 17px;
  width: 21px;
  height: 73px;
  border-radius: 0 3px 3px 0;
  background: #adff82;
`;

const Pointer = styled.svg`
  position: absolute;
  top: 306px;
  right: 46px;
  width: 8px;
  height: 13px;
`;

function App() {
  return (
    <Window>
      <GlobalStyle />
      <TitleBar>
        <Icon name="godot" size={10} />
        <span>(*) Inventory_Slot.tscn - InventorySystem - Godot Engine</span>
        <Spacer />
        <Row>
          <WindowButton aria-label="Minimize"><Icon name="minimize" size={8} /></WindowButton>
          <WindowButton aria-label="Restore"><Icon name="restore" size={8} /></WindowButton>
          <WindowButton aria-label="Close"><Icon name="exit" size={8} /></WindowButton>
        </Row>
      </TitleBar>
      <Frame>
        <TopMenu />
        <Workspace>
          <Column>
            <SceneDock />
            <FileSystemDock />
          </Column>
          <Column $gap={6}>
            <CanvasEditor />
            <Output />
          </Column>
          <Column>
            <Inspector />
          </Column>
        </Workspace>
      </Frame>
      <GreenTag />
      <Pointer viewBox="0 0 8 13">
        <path d="M1 1v10l2-2 1.500 4 1.500-.600L4.600 8.600H7.800z" fill="#fff" stroke="#222" strokeWidth="0.500" />
      </Pointer>
    </Window>
  );
}

export default App;
